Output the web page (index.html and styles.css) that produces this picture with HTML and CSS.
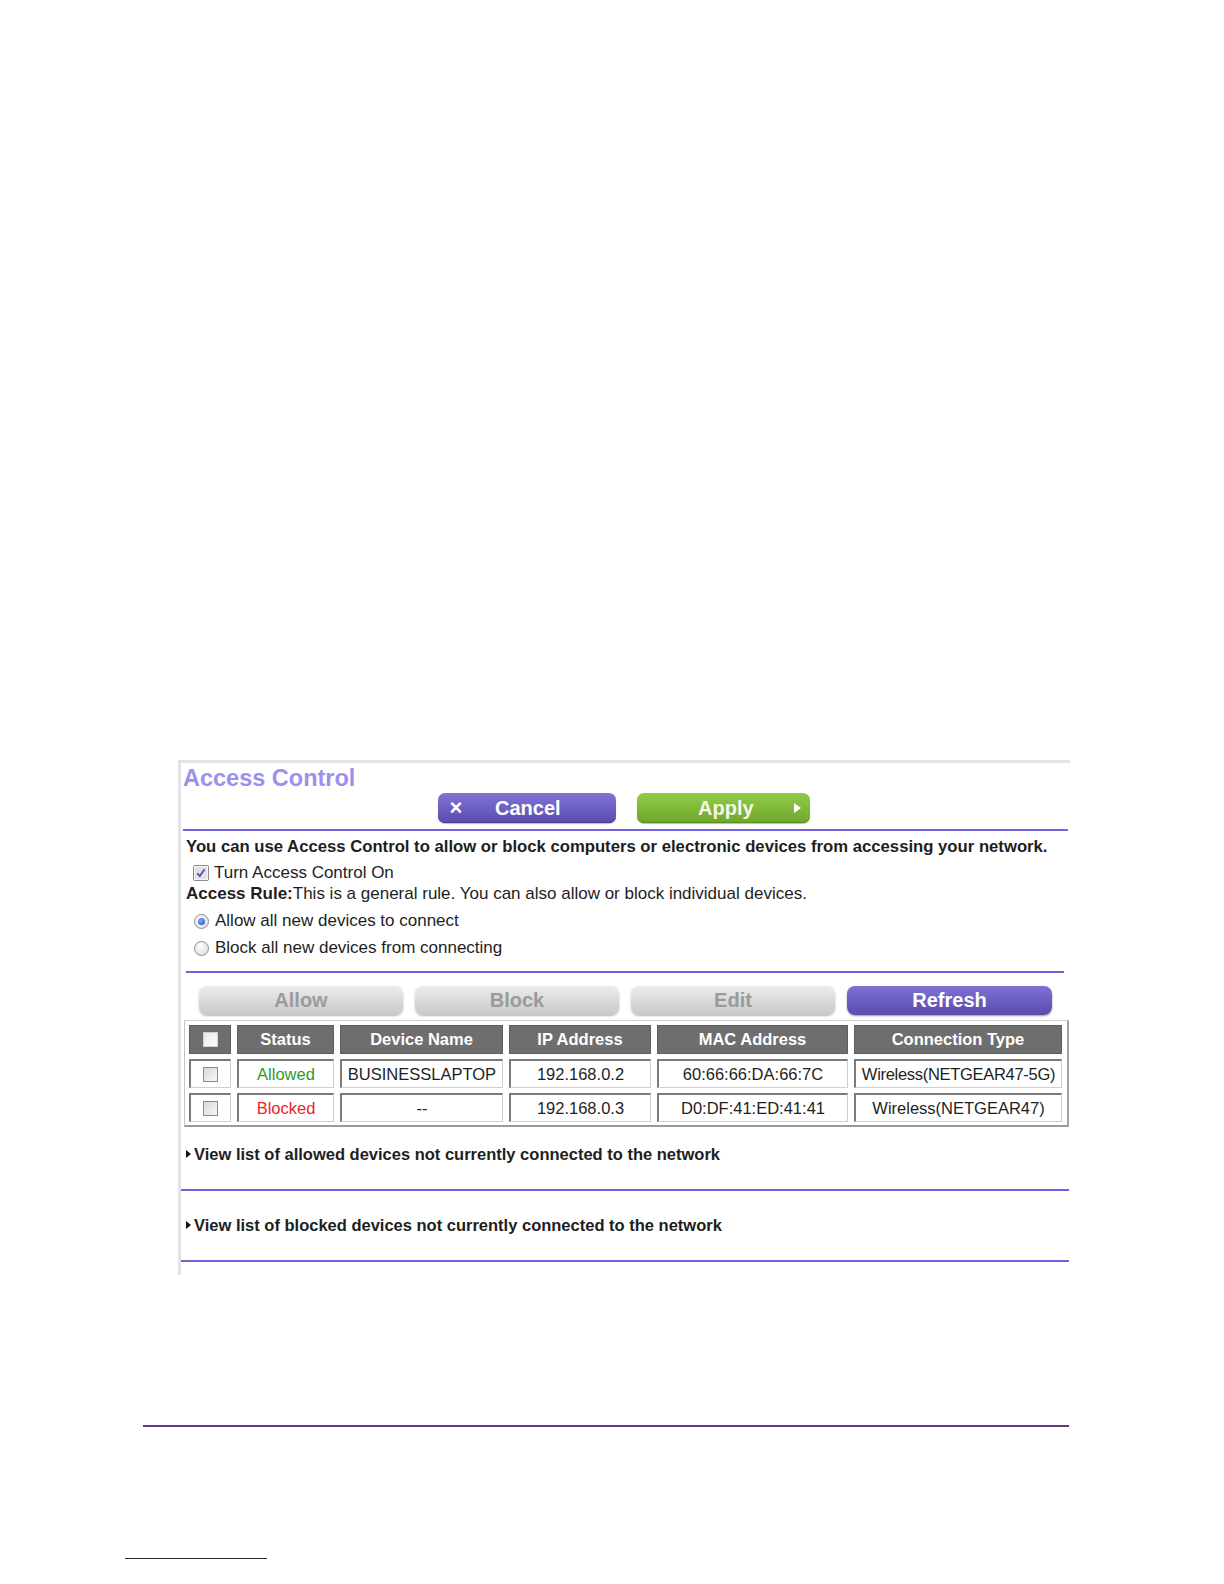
FILE: index.html
```html
<!DOCTYPE html>
<html lang="en">
<head>
<meta charset="utf-8">
<title>Access Control</title>
<link rel="stylesheet" href="styles.css">
</head>
<body>
<div class="page">
  <div class="top-space"></div>
  <div class="shot">
    <div class="head">
      <div class="title">Access Control</div>
      <div class="actions">
        <div class="btn btn-cancel"><span class="x">×</span><span class="lbl">Cancel</span></div>
        <div class="btn btn-apply"><span class="lbl">Apply</span><span class="arrow"></span></div>
      </div>
    </div>
    <div class="rules">
      <div class="intro">You can use Access Control to allow or block computers or electronic devices from accessing your network.</div>
      <div class="opt opt-check">
        <span class="cbox checked"><svg viewBox="0 0 16 16" width="16" height="16"><rect x="0.5" y="0.5" width="15" height="15" rx="1" fill="#f4f4f4" stroke="#8a8a8a"/><rect x="2" y="2" width="12" height="12" fill="#e2e2e2"/><path d="M4.3 8.3 L6.8 11 L11.6 4.2" fill="none" stroke="#4a52c8" stroke-width="1.8"/></svg></span>
        <span>Turn Access Control On</span>
      </div>
      <div class="rule"><b>Access Rule:</b>This is a general rule. You can also allow or block individual devices.</div>
      <div class="opt opt-radio">
        <span class="radio on"></span><span>Allow all new devices to connect</span>
      </div>
      <div class="opt opt-radio second">
        <span class="radio"></span><span>Block all new devices from connecting</span>
      </div>
    </div>
    <div class="devices">
      <div class="tools">
        <div class="tbtn">Allow</div>
        <div class="tbtn">Block</div>
        <div class="tbtn">Edit</div>
        <div class="tbtn tbtn-on">Refresh</div>
      </div>
      <div class="grid">
        <div class="hc"><span class="sq"></span></div>
        <div class="hc">Status</div>
        <div class="hc">Device Name</div>
        <div class="hc">IP Address</div>
        <div class="hc">MAC Address</div>
        <div class="hc">Connection Type</div>

        <div class="dc"><span class="sq"></span></div>
        <div class="dc allowed">Allowed</div>
        <div class="dc">BUSINESSLAPTOP</div>
        <div class="dc">192.168.0.2</div>
        <div class="dc">60:66:66:DA:66:7C</div>
        <div class="dc wide">Wireless(NETGEAR47-5G)</div>

        <div class="dc"><span class="sq"></span></div>
        <div class="dc blocked">Blocked</div>
        <div class="dc">--</div>
        <div class="dc">192.168.0.3</div>
        <div class="dc">D0:DF:41:ED:41:41</div>
        <div class="dc">Wireless(NETGEAR47)</div>
      </div>
    </div>
    <div class="link first"><span class="tri"></span>View list of allowed devices not currently connected to the network</div>
    <div class="link second"><span class="tri"></span>View list of blocked devices not currently connected to the network</div>
  </div>
  <div class="footer-line"></div>
  <div class="short-line"></div>
</div>
</body>
</html>
```

FILE: styles.css
```css
* { box-sizing: border-box; }
html, body { margin: 0; padding: 0; background: #fff; }
body { font-family: "Liberation Sans", Arial, sans-serif; color: #1e1e1e; }
.page { width: 1224px; height: 1584px; overflow: hidden; }
.top-space { height: 760px; }

.shot {
  margin-left: 178px;
  width: 892px;
  height: 515px;
  border-top: 3px solid #e4e4e4;
  border-left: 3px solid #e4e4e4;
}

.head {
  margin: 0 2px;
  padding-bottom: 6px;
  border-bottom: 2px solid #6f63e2;
}
.title {
  height: 30px;
  line-height: 30px;
  font-size: 23.5px;
  font-weight: bold;
  color: #9c90ee;
}
.actions {
  display: flex;
  height: 30px;
  padding-left: 255px;
  gap: 21px;
}
.btn {
  height: 30px;
  border-radius: 7px;
  color: #fff;
  font-weight: bold;
  font-size: 20px;
  display: flex;
  align-items: center;
  position: relative;
}
.btn-cancel {
  width: 178px;
  background: linear-gradient(#7f74d6, #5b4cae);
  box-shadow: inset 0 -1px 0 #4a3d98, 0 1px 1px #bbb;
}
.btn-cancel .x { margin-left: 8px; font-size: 22px; width: 20px; text-align: center; }
.btn-cancel .lbl { margin-left: 29px; }
.btn-apply {
  width: 173px;
  background: linear-gradient(#93cb48, #6ea72c);
  box-shadow: inset 0 -1px 0 #5a8c22, 0 1px 1px #bbb;
  color: #f4f7e8;
}
.btn-apply .lbl { margin-left: 61px; }
.btn-apply .arrow {
  margin-left: 40px;
  width: 0; height: 0;
  border-left: 7px solid #fff;
  border-top: 5px solid transparent;
  border-bottom: 5px solid transparent;
}

.rules {
  margin: 0 6px 0 5px;
  padding-top: 6px;
  padding-bottom: 13px;
  border-bottom: 2px solid #6f63e2;
  font-size: 17px;
}
.intro { line-height: 20px; font-size: 16.7px; font-weight: bold; white-space: nowrap; }
.opt { display: flex; align-items: center; height: 20px; line-height: 20px; }
.opt-check { margin-top: 6px; padding-left: 7px; }
.cbox { width: 16px; height: 16px; margin-right: 5px; display: inline-block; }
.cbox svg { display: block; }
.rule { margin-top: 1px; line-height: 20px; white-space: nowrap; }
.rule b { font-weight: bold; }
.opt-radio { margin-top: 7px; padding-left: 8px; }
.radio {
  width: 15px; height: 15px; border-radius: 50%;
  border: 1px solid #8d8d8d;
  background: radial-gradient(circle at 40% 35%, #fff, #d8d8d8);
  margin-right: 6px;
  display: inline-block;
  position: relative;
}
.radio.on::after {
  content: "";
  position: absolute;
  left: 3px; top: 3px;
  width: 7px; height: 7px; border-radius: 50%;
  background: radial-gradient(circle at 40% 35%, #7fa8ff, #1e4fc8);
}

.devices { margin-left: 3px; width: 885px; }
.tools {
  display: flex;
  gap: 12px;
  padding-top: 13px;
  padding-left: 15px;
}
.tbtn {
  width: 204px;
  height: 29px;
  border-radius: 8px;
  background: linear-gradient(#ececec, #c9c9c9);
  box-shadow: 0 1px 2px #b5b5b5;
  color: #9b9b9b;
  font-weight: bold;
  font-size: 20px;
  display: flex;
  align-items: center;
  justify-content: center;
}
.tbtn-on {
  width: 205px;
  background: linear-gradient(#7d72d4, #5a4bad);
  color: #fff;
  box-shadow: 0 1px 2px #9a9a9a;
}

.grid {
  margin-top: 5px;
  display: grid;
  grid-template-columns: 42px 97px 163px 142px 191px 208px;
  grid-auto-rows: 29px;
  column-gap: 6px;
  row-gap: 5px;
  padding: 4px 4px 3px 4px;
  border-top: 1px solid #d0d0d0;
  border-left: 1px solid #c4c4c4;
  border-right: 2px solid #a3a3a3;
  border-bottom: 2px solid #9a9a9a;
}
.hc {
  background: #6e6e6e;
  border: 1px solid #5e5e5e;
  color: #fff;
  font-weight: bold;
  font-size: 16.5px;
  display: flex;
  align-items: center;
  justify-content: center;
  white-space: nowrap;
}
.dc {
  background: #fff;
  border-top: 2px solid #7a7a7a;
  border-left: 2px solid #7a7a7a;
  border-right: 1px solid #cfcfcf;
  border-bottom: 1px solid #cfcfcf;
  font-size: 16.5px;
  color: #1e1e1e;
  display: flex;
  align-items: center;
  justify-content: center;
  white-space: nowrap;
  overflow: visible;
}
.dc.wide { letter-spacing: -0.3px; }
.allowed { color: #2e9a2a; }
.blocked { color: #ec2328; }
.sq {
  width: 15px; height: 15px;
  border: 1px solid #8a8a8a;
  background: linear-gradient(135deg, #d9d9d9, #f7f7f7);
  display: inline-block;
}
.hc .sq { background: linear-gradient(135deg, #e8e8e8, #ffffff); border-color: #cfcfcf; }

.link {
  margin-right: 1px;
  padding-left: 5px;
  line-height: 20px;
  font-size: 16.5px;
  font-weight: bold;
  white-space: nowrap;
  border-bottom: 2px solid #6f63e2;
  display: flex;
  align-items: flex-start;
}
.link.first { margin-top: 17px; padding-bottom: 25px; }
.link.second { padding-top: 24px; padding-bottom: 25px; }
.tri {
  width: 0; height: 0;
  border-left: 5px solid #111;
  border-top: 4px solid transparent;
  border-bottom: 4px solid transparent;
  margin: 6px 3px 0 0;
}

.footer-line {
  margin-top: 150px;
  margin-left: 143px;
  width: 926px;
  height: 2px;
  background: #5d3c82;
}
.short-line {
  margin-top: 131px;
  margin-left: 125px;
  width: 142px;
  height: 1px;
  background: #2a2a2a;
}
```
